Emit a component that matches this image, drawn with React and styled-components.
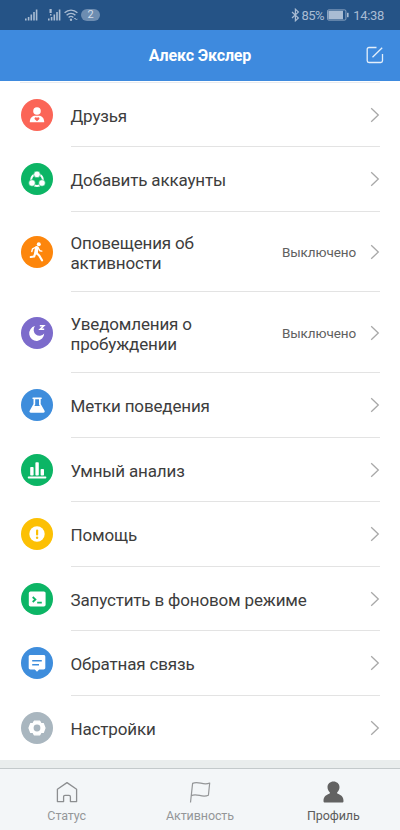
import React from "react";
import styled, { createGlobalStyle } from "styled-components";

const GlobalStyle = createGlobalStyle`
  * { box-sizing: border-box; }
  body { margin: 0; background: #fff; font-family: Roboto, "Noto Sans", sans-serif; }
`;

const Screen = styled.div`
  width: 400px;
  height: 830px;
  display: flex;
  flex-direction: column;
  overflow: hidden;
  background: #fff;
`;

const StatusBar = styled.div`
  height: 29.5px;
  flex: none;
  display: flex;
  align-items: center;
  justify-content: space-between;
  padding: 0 16px 0 25px;
  background: #255386;
  color: #a9bcd3;
  font-size: 13px;
`;

const StatusGroup = styled.div`
  display: flex;
  align-items: center;
  height: 29px;
`;

const SecondSim = styled.span`
  display: flex;
  margin: 0 3px 0 10px;
`;

const Percent = styled.span`
  margin: 1px 3px 0 1px;
  letter-spacing: -0.5px;
`;

const Clock = styled.span`
  margin: 1px 0 0 4px;
  letter-spacing: -0.3px;
`;

const CountPill = styled.span`
  width: 19px;
  height: 12px;
  margin: 1px 0 0 3px;
  border-radius: 6px;
  background: #6d8db1;
  color: #d3deea;
  font-size: 11px;
  line-height: 12.5px;
  text-align: center;
`;

const Header = styled.header`
  height: 51px;
  flex: none;
  display: grid;
  grid-template-columns: 50px 1fr 50px;
  align-items: center;
  background: #3e8ade;
`;

const Title = styled.h1`
  grid-column: 2;
  margin: 2px 0 0;
  color: #fff;
  font-size: 16px;
  font-weight: 700;
  line-height: 20px;
  letter-spacing: -0.15px;
  text-align: center;
`;

const EditButton = styled.button`
  display: flex;
  justify-content: center;
  padding: 0;
  border: 0;
  background: none;
`;

const List = styled.main`
  flex: none;
  display: flex;
  flex-direction: column;
`;

const TopRule = styled.div`
  height: 1px;
  margin: 1px 20px 0;
  background: #e9ebef;
`;

const Row = styled.div`
  height: ${(p) => (p.$tall ? "80.75px" : "64.5px")};
  display: flex;
  align-items: stretch;
  padding: 0 20px 0 21px;
`;

const Badge = styled.div`
  width: 32px;
  height: 32px;
  align-self: center;
  flex: none;
  border-radius: 50%;
  background: ${(p) => p.$color};
  display: flex;

  svg { display: block; }
`;

const RowBody = styled.div`
  flex: 1;
  margin-left: 18px;
  display: flex;
  align-items: center;
  justify-content: space-between;
  border-bottom: 1px solid ${(p) => (p.$last ? "transparent" : "#e3e3e3")};
`;

const Label = styled.div`
  margin-top: 3px;
  margin-left: -0.5px;
  color: #3d3d3d;
  font-size: 17px;
  line-height: 20px;
  letter-spacing: -0.16px;
  white-space: pre-line;
`;

const Trailing = styled.div`
  display: flex;
  align-items: center;
  gap: 14px;

  svg { margin-top: 1px; }
`;

const Value = styled.span`
  margin-top: 2px;
  color: #606060;
  font-size: 13.5px;
  letter-spacing: -0.1px;
`;

const Gap = styled.div`
  flex: 1;
  background: #e9eded;
`;

const TabBar = styled.nav`
  height: 62px;
  flex: none;
  display: grid;
  grid-template-columns: repeat(3, 1fr);
  border-top: 1px solid #c3c9cb;
  background: #f3f6f8;
`;

const Tab = styled.div`
  display: flex;
  flex-direction: column;
  align-items: center;
  padding-top: 12px;
  color: ${(p) => (p.$active ? "#5c5c5c" : "#949698")};
  font-size: 12.5px;
  line-height: 16px;
  letter-spacing: -0.1px;

  svg { margin-bottom: 4px; }
`;

const Signal = ({ alert }) => (
  <svg width="13" height="14" viewBox="0 0 13 14" fill="#a9bcd3">
    <rect x="0" y="10.5" width="1.6" height="2" />
    <rect x="2.8" y="9" width="1.6" height="3.5" />
    <rect x="5.5" y="6.5" width="1.6" height="6" />
    <rect x="8.2" y="4" width="1.6" height="8.5" />
    <rect x="10.8" y="1.5" width="1.6" height="11" />
    {alert && <path d="M1.5 1h2.2v4H1.5zM2 6h1.5v1.5H2z" />}
  </svg>
);

const Wifi = () => (
  <svg width="14" height="14" viewBox="0 0 14 14" fill="none" stroke="#a9bcd3" strokeWidth="1.4">
    <path d="M.6 4.8C4.3 1.2 9.7 1.2 13.4 4.8M2.6 7.2c2.5-2.4 6.3-2.4 8.8 0M4.6 9.5c1.4-1.3 3.4-1.3 4.8 0" />
    <circle cx="7" cy="11.7" r="1.2" fill="#a9bcd3" stroke="none" />
    <path d="M10 11.2l1-1.2 1 1.2M11.4 10.8l1 1.2 1-1.2" strokeWidth=".8" />
  </svg>
);

const Bluetooth = () => (
  <svg width="9" height="14" viewBox="0 0 9 14" fill="none" stroke="#a9bcd3" strokeWidth="1.2">
    <path d="M1 4l6.4 6-3 2.800V1.200l3 2.800L1 10" />
  </svg>
);

const Battery = () => (
  <svg width="22" height="12" viewBox="0 0 22 12">
    <rect x=".5" y=".9" width="18.4" height="10.2" rx="1.2" fill="none" stroke="#8aa4c2" />
    <rect x="1.4" y="1.8" width="14.6" height="8.400" fill="#a9bcd3" />
    <rect x="20" y="3.800" width="1.600" height="4.400" fill="#a9bcd3" />
  </svg>
);

const EditIcon = () => (
  <svg width="18" height="18" viewBox="0 0 18 18" fill="none" stroke="#e4effb" strokeWidth="1.3">
    <path d="M10.5 1.5H3A1.8 1.8 0 0 0 1.2 3.3v11.4A1.8 1.8 0 0 0 3 16.5h11.700a1.800 1.800 0 0 0 1.800-1.800V8M6.500 11.200L16.200 1.700" />
  </svg>
);

const Chevron = () => (
  <svg width="10" height="16" viewBox="0 0 10 16" fill="none" stroke="#a8a8a8" strokeWidth="1.3">
    <path d="M1.2 1.2L8.3 8l-7.1 6.8" />
  </svg>
);

const glyphs = {
  friends: (c) => (
    <>
      <circle cx="16" cy="12" r="3.8" />
      <path d="M8.8 23.2c0-4.2 2.4-6.4 5.2-6.4h4c2.8 0 5.2 2.2 5.2 6.4z" />
      <path fill={c} d="M16 22.2l-2.2-2c-.8-.9.1-2.3 1.2-1.9.5.1.8.5 1 .8.2-.3.5-.7 1-.8 1.1-.4 2 1 1.2 1.900z" />
    </>
  ),
  accounts: (c) => (
    <>
      <circle cx="16" cy="17" r="5.9" fill="none" stroke="#fff" strokeWidth="2" />
      <g stroke={c} strokeWidth=".6">
        <circle cx="16" cy="11.400" r="3.300" />
        <circle cx="11" cy="20" r="3.300" />
        <circle cx="21" cy="20" r="3.300" />
      </g>
    </>
  ),
  runner: () => (
    <>
      <circle cx="17.8" cy="8.3" r="2" />
      <path d="M15.8 11.7L15 16.800" stroke="#fff" strokeWidth="3.600" strokeLinecap="round" />
      <path d="M15 16.500l3.200 3 2.800 4.800M14.300 17.200l-1.200 3.300-3.300.5" fill="none" stroke="#fff" strokeWidth="2.200" strokeLinecap="round" strokeLinejoin="round" />
      <path d="M15 11l-3.400 1.800-.8 2.700M17 11.500l1.800 3.200 2 .4" fill="none" stroke="#fff" strokeWidth="1.400" strokeLinecap="round" strokeLinejoin="round" />
    </>
  ),
  moon: () => (
    <>
      <path d="M14 9.1a5.8 5.8 0 0 0 9.2 7.5A7.5 7.5 0 1 1 14 9.100z" />
      <path d="M18.800 8.800h4l-3.600 3.400h4" fill="none" stroke="#fff" strokeWidth="1.500" />
    </>
  ),
  flask: (c) => (
    <>
      <rect x="11.300" y="8.400" width="9.600" height="1.700" rx=".8" />
      <path d="M12.500 9h7.200v6.100l3.700 6.500c.8 1.200.2 2.200-1.100 2.200H9.900c-1.300 0-1.900-1-1.100-2.200l3.700-6.500z" />
      <path d="M14.200 10.200h3.800v5.200l.8 1.500h-5.400l.8-1.500z" fill={c} />
    </>
  ),
  bars: () => (
    <>
      <rect x="9.2" y="13" width="3.4" height="8.600" rx=".8" />
      <rect x="14.400" y="8.200" width="3.400" height="13.400" rx=".8" />
      <rect x="19.600" y="15" width="3.400" height="6.600" rx=".8" />
      <rect x="6.800" y="22.400" width="18.500" height="2" rx=".7" />
    </>
  ),
  help: (c) => (
    <>
      <circle cx="16" cy="16" r="7.700" />
      <rect x="15" y="11.400" width="2.200" height="6" rx="1" fill={c} />
      <circle cx="16.100" cy="19.700" r="1.200" fill={c} />
    </>
  ),
  terminal: (c) => (
    <>
      <rect x="7.800" y="8.400" width="16.800" height="15" rx="1.700" />
      <path d="M11.700 14l2.700 2.500-2.700 2.500M16.200 19.600h4.600" fill="none" stroke={c} strokeWidth="1.800" />
    </>
  ),
  feedback: (c) => (
    <>
      <path d="M9.400 8h13.200c1 0 1.700.7 1.700 1.700v11c0 1-.7 1.700-1.700 1.700h-4.400L16 24.800l-2.200-2.400H9.400c-1 0-1.700-.7-1.700-1.700v-11C7.700 8.700 8.400 8 9.400 8z" />
      <path d="M11.200 13.700h9.600M11.200 17.700h6.800" stroke={c} strokeWidth="1.600" />
    </>
  ),
  gear: (c) => (
    <>
      <path
        d="M13.200 9.200h5.600l1.200 2.300h2.300L24 16l-1.700 4.500H20l-1.200 2.300h-5.600L12 20.500H9.700L8 16l1.700-4.500H12z"
        stroke="#fff"
        strokeWidth="1.200"
        strokeLinejoin="round"
      />
      <circle cx="16" cy="16" r="3.400" fill={c} />
    </>
  ),
};

const items = [
  { icon: "friends", color: "#fb6557", label: "Друзья" },
  { icon: "accounts", color: "#0cb565", label: "Добавить аккаунты" },
  { icon: "runner", color: "#fd860c", label: "Оповещения об\nактивности", value: "Выключено" },
  { icon: "moon", color: "#7c6bcb", label: "Уведомления о\nпробуждении", value: "Выключено" },
  { icon: "flask", color: "#3e8ddc", label: "Метки поведения" },
  { icon: "bars", color: "#0cb565", label: "Умный анализ" },
  { icon: "help", color: "#fcc004", label: "Помощь" },
  { icon: "terminal", color: "#0cb565", label: "Запустить в фоновом режиме" },
  { icon: "feedback", color: "#3e8ddc", label: "Обратная связь" },
  { icon: "gear", color: "#a9b6bf", label: "Настройки" },
];

const HomeIcon = () => (
  <svg width="22" height="23" viewBox="0 0 22 23" fill="none" stroke="#8c8e90" strokeWidth="1.3" strokeLinejoin="round">
    <path d="M1.400 8.200L11 1.600l9.600 6.600v12.400h-6.200v-4.800c0-.9-.5-1.400-1.400-1.400H9c-.9 0-1.400.5-1.400 1.400v4.800H1.400z" />
  </svg>
);

const FlagIcon = () => (
  <svg width="22" height="23" viewBox="0 0 22 23" fill="none" stroke="#949698" strokeWidth="1.200" strokeLinejoin="round">
    <path d="M1.500 21.500L3.600 2.400C9.500-.6 14 5 20.700 2l-1.300 12.200c-6.500 3-11-2.400-17.100.4" />
  </svg>
);

const ProfileIcon = () => (
  <svg width="22" height="23" viewBox="0 0 22 23" fill="#626262">
    <path d="M11.500 .5C8.100 .5 5.500 2.800 5.500 6.100c0 2.400 1 3.900 2.200 5.100.5.600.2 1.200-.5 1.600C3.700 14.200 1.500 16 1.500 19.900c0 1 .5 1.600 1.500 1.600h17c1 0 1.500-.6 1.500-1.600 0-3.900-2.200-5.700-5.700-7.100-.7-.4-1-1-.5-1.600C16.500 10 17.500 8.500 17.500 6.100 17.500 2.800 14.900 .5 11.500 .5z" />
  </svg>
);

export default function App() {
  return (
    <Screen>
      <GlobalStyle />
      <StatusBar>
        <StatusGroup>
          <Signal />
          <SecondSim><Signal alert /></SecondSim>
          <Wifi />
          <CountPill>2</CountPill>
        </StatusGroup>
        <StatusGroup>
          <Bluetooth />
          <Percent>85%</Percent>
          <Battery />
          <Clock>14:38</Clock>
        </StatusGroup>
      </StatusBar>
      <Header>
        <Title>Алекс Экслер</Title>
        <EditButton aria-label="Изменить"><EditIcon /></EditButton>
      </Header>
      <List>
        <TopRule />
        {items.map((item, i) => (
          <Row key={item.label} $tall={!!item.value}>
            <Badge $color={item.color}>
              <svg width="32" height="32" viewBox="0 0 32 32" fill="#fff">
                {glyphs[item.icon](item.color)}
              </svg>
            </Badge>
            <RowBody $last={i === items.length - 1}>
              <Label>{item.label}</Label>
              <Trailing>
                {item.value && <Value>{item.value}</Value>}
                <Chevron />
              </Trailing>
            </RowBody>
          </Row>
        ))}
      </List>
      <Gap />
      <TabBar>
        <Tab><HomeIcon />Статус</Tab>
        <Tab><FlagIcon />Активность</Tab>
        <Tab $active><ProfileIcon />Профиль</Tab>
      </TabBar>
    </Screen>
  );
}
